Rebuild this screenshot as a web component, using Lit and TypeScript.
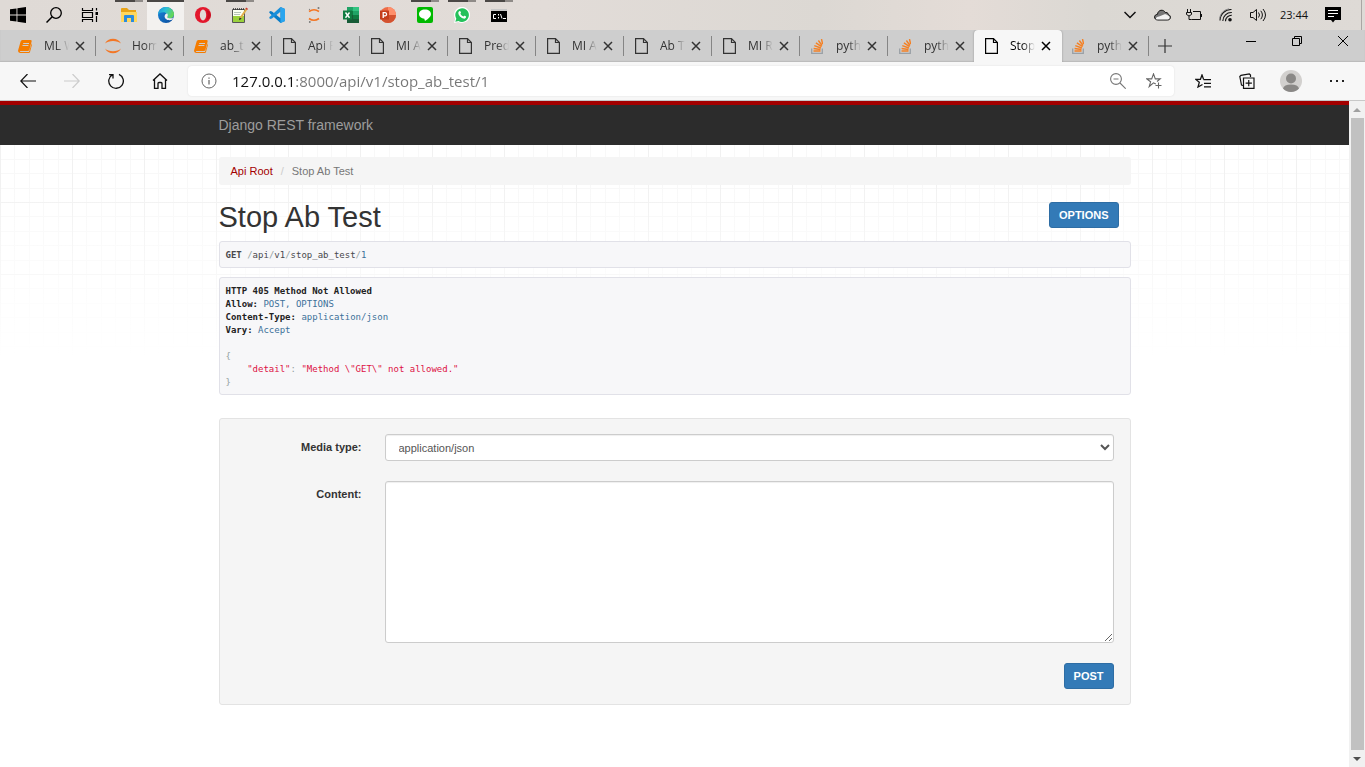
import { LitElement, html, css, svg, TemplateResult } from "lit";
import { customElement, property } from "lit/decorators.js";
import { classMap } from "lit/directives/class-map.js";

const icon = (w: number, h: number, body: unknown) => html`<svg
  width=${w}
  height=${h}
  viewBox="0 0 ${w} ${h}"
  fill="none"
  aria-hidden="true"
>${body}</svg>`;

const icons: Record<string, TemplateResult> = {
  windows: icon(16, 16, svg`<path fill="#000" d="M0 2.3 6.5 1.4V7.6H0zM7.4 1.3 16 0V7.6H7.4zM0 8.4H6.5V14.6L0 13.7zM7.4 8.4H16V16L7.4 14.7z"/>`),
  search: icon(16, 16, svg`<circle cx="10" cy="6" r="5.3" stroke="#000" stroke-width="1.3"/><path d="M6.2 9.8 .5 15.5" stroke="#000" stroke-width="1.5"/>`),
  taskview: icon(18, 16, svg`<path stroke="#000" stroke-width="1.2" d="M1.5 1V3.5H11.5V1M1.5 15V12.5H11.5V15M1.5 5.5H11.5V10.5H1.5zM15.5 1V3.500M15.5 9V15"/><path fill="#000" d="M14.500 5H17V8H14.500z"/>`),
  folder: icon(16, 14, svg`<path fill="#e8a317" d="M0 1Q0 0 1 0H6L8 2H15V5H0z"/><path fill="#ffd75e" d="M0 4H16V14H0z"/><path fill="#2b8be0" d="M3 8Q3 7 4 7H12Q13 7 13 8V14H10V10H6V14H3z"/>`),
  edge: icon(16, 16, svg`<defs><linearGradient id="ea" x1="0" y1="0" x2="1" y2=".4"><stop offset="0" stop-color="#1b8fd8"/><stop offset=".5" stop-color="#2cc0d6"/><stop offset="1" stop-color="#63d65a"/></linearGradient><linearGradient id="eb" x1="0" y1="0" x2="1" y2="1"><stop offset="0" stop-color="#1889dc"/><stop offset="1" stop-color="#0c4a9a"/></linearGradient></defs><circle cx="8" cy="8" r="8" fill="url(#eb)"/><path fill="url(#ea)" d="M0 8C0 3 4 0 8 0C13 0 16 4 16 7C16 10 14 11.3 11.8 11.3C10 11.3 9 10.8 9.3 9.8C9.8 8 8.5 5.2 5.5 5.2C2.5 5.2 .4 6.5 0 8z"/><path fill="#f3f1ef" d="M9.3 6.5C10 8 10 9 9.2 10.2C10 11.6 13 11.8 15.3 10.4L14 12.8C10 14 6.5 12 6.6 9.2C6.7 7.5 8 6.3 9.3 6.5z"/>`),
  opera: icon(16, 16, svg`<ellipse cx="8" cy="8" rx="8" ry="8" fill="#e3182d"/><ellipse cx="8" cy="8" rx="3.2" ry="5.4" fill="#e1dcd8"/><path fill="#a70014" d="M11 3C13 5 13 11 11 13C15 12 16 10 16 8S14 3.5 11 3z" opacity=".45"/>`),
  notepad: icon(17, 16, svg`<path fill="#fafff2" stroke="#555" d="M1.5 2.5H13.5V15.5H1.5z"/><path fill="#9bd13c" d="M2 9H13V15H2z"/><path stroke="#333" stroke-width="1.5" stroke-dasharray="1 1" d="M2 2H13"/><path stroke="#b5c4b5" d="M3 5.5H10M3 7.5H9"/><path stroke="#e0b04a" stroke-width="2" d="M15.5 2 9.5 11"/><path stroke="#c33" stroke-width="2.200" d="M16 1.2 15.3 2.3"/><path fill="#222" d="M8 13.2 8.6 10.6 10.6 11.8z"/>`),
  vscode: icon(16, 16, svg`<path fill="#0a7dc8" d="M11.5 0 16 2V14L11.5 16 1 6.5 0 5 1.5 4 3 4.4 11.5 11.2z"/><path fill="#2aa5ee" d="M11.5 0 16 2V14L11.5 16z"/><path fill="#1a8fda" d="M11.5 0V4.8L3 11.6 1.5 12 0 11 1 9.5z"/>`),
  jupyterSmall: icon(12, 16, svg`<path stroke="#f37726" stroke-width="1.6" d="M1 4.5Q6 1 11 4.5M1 11.5Q6 15 11 11.5"/><circle cx="10.5" cy="1" r="1" fill="#777"/><circle cx="1.5" cy="2.3" r=".6" fill="#777"/><circle cx="1.8" cy="15" r=".9" fill="#777"/>`),
  excel: icon(16, 16, svg`<path fill="#21a366" d="M4 0H16V16H4z"/><path fill="#33c481" d="M10 0H16V4H10z"/><path fill="#107c41" d="M4 4H10V8H4zM10 8H16V12H10z"/><path fill="#185c37" d="M4 8H10V16H4zM4 12H16V16H4z"/><path fill="#107c41" d="M0 3.5H9V12.5H0z"/><path stroke="#fff" stroke-width="1.4" d="M2.5 5.5 6.5 10.7M6.5 5.5 2.5 10.7"/>`),
  powerpoint: icon(16, 16, svg`<circle cx="8" cy="8" r="8" fill="#ed6c47"/><path fill="#ff8f6b" d="M8 0A8 8 0 0 1 16 8H8z"/><path fill="#d35230" d="M0 8H16A8 8 0 0 1 0 8z"/><path fill="#c43e1c" d="M0 3.5H9V12.5H0z"/><path stroke="#fff" stroke-width="1.3" d="M3.2 11V5.6H5.2Q6.6 5.8 6.6 7.2T5.2 8.8H3.2"/>`),
  line: icon(16, 16, svg`<rect width="16" height="16" rx="2" fill="#00b900"/><path fill="#fff" d="M8 2.6C11.6 2.6 14 4.7 14 7.2C14 9.6 11.5 11.5 8.3 13.8C7.6 14.2 7.7 12.8 7.4 11.8C4.3 11.4 2 9.7 2 7.2C2 4.7 4.4 2.6 8 2.6z"/>`),
  whatsapp: icon(16, 16, svg`<path fill="#fff" d="M0 16 1.2 12A8 8 0 1 1 4.2 14.9z"/><path fill="#25c15b" d="M1.3 14.7 2.3 11.7A6.8 6.8 0 1 1 4.5 13.9z"/><path fill="#fff" d="M5.3 4.2C6.2 3.7 6.4 4 7 5.6C7 6.2 6.3 6.5 6.4 6.8C7.2 8.3 8 9 9.4 9.5C9.8 9.3 10.1 8.5 10.6 8.7L12.1 9.5C12.3 10.8 11 11.9 9.6 11.6C6.8 11 4.4 8.4 4.3 6.1C4.3 5.2 4.8 4.6 5.3 4.2z"/>`),
  cmd: icon(16, 13, svg`<path fill="#000" d="M0 0H16V13H0z"/><path fill="#c8c8c8" d="M0 0H16V2H0z"/><path stroke="#fff" d="M5 5.5H2.5V9.5H5M7.5 5V6.5M7.5 8V9.5M9.5 5 11 9.5M12 9.5H15"/>`),
  chevron: icon(12, 8, svg`<path stroke="#111" stroke-width="1.5" d="M.5 1 6 6.5 11.5 1"/>`),
  cloud: icon(17, 12, svg`<path fill="#777" stroke="#111" d="M4 11C-.5 11-.5 5.5 3.5 5.3C4 .5 9.500 0 11.300 3.500C14 3 14.500 5.500 14.500 5.800C17.500 6.500 17 11 13.500 11z"/><path fill="#f2f2f2" d="M3 10.500C1 10.500 2 7.500 5 7.500L10 5.500C12 5 13 6 14 6.500C16.500 7.500 16 10.500 13.500 10.500z"/>`),
  battery: icon(16, 12, svg`<path stroke="#111" d="M7 2.500H14.500V10.500H5.500M15.500 5V8M1.500 0V3M4.500 0V3M.500 3.500H5.500V5.500L3 7 .500 5.500zM3 7V10.500H5.500"/>`),
  wifi: icon(14, 14, svg`<path stroke="#111" stroke-width="1.100" d="M1 12.500A11 11 0 0 1 12.500 1.500M3.800 13A8.500 8.500 0 0 1 12.800 4.500M6.500 13.300A6 6 0 0 1 12.800 7.300"/><path stroke="#888" d="M.5 10.500A12 12 0 0 1 10 .8"/><circle cx="11" cy="11.800" r="1.800" fill="#111"/>`),
  volume: icon(17, 14, svg`<path stroke="#111" d="M.5 4.500H3L6.500 1.500V12.500L3 9.500H.5zM8.500 4.500Q10.500 7 8.500 9.500M10.800 2.800Q14 7 10.800 11.200M13 1Q18 7 13 13"/>`),
  notice: icon(16, 16, svg`<path fill="#000" d="M0 0H16V13H10L8 15.500 6 13H0z"/><path stroke="#fff" d="M3 3.500H13M3 6.500H13M3 9.500H9"/>`),
  book: icon(14, 13, svg`<path fill="#f57c00" d="M4.300 0H12.500Q14 0 13.600 1.500L11.500 9.500Q11 11 9.500 11H2.300Q1.300 11.800 2.500 12H11L13.800 3L13.900 5 12 12Q11.800 13 10.600 13H2Q-.5 12.500 .2 10L2.600 1.600Q3 0 4.300 0z"/><path stroke="#cecece" d="M5.200 3.500H11M4.500 5.500H10.400"/>`),
  jupyter: icon(16, 16, svg`<path fill="#f37726" d="M0 5.500C2.500-.8 13.500-.8 16 5.500C12.500 2 3.500 2 0 5.500zM0 10.500C2.500 16.800 13.500 16.800 16 10.500C12.500 14 3.500 14 0 10.500z"/>`),
  page: icon(13, 16, svg`<path stroke="currentColor" stroke-width="1.200" d="M.6 .6H8.500L12.400 4.500V15.400H.6zM8.500 .6V4.500H12.400"/>`),
  stack: icon(12, 15, svg`<path stroke="#9aa0a6" stroke-width="1.300" d="M.7 9.500V14.300H11.300V9.500"/><path stroke="#f48024" stroke-width="1.400" d="M2.500 12H9.500M2.600 9.500 9.500 10.500M3.300 6.700 9.900 9M4.900 3.900 10.600 7.600M7.400 1.500 11 6.500M10.500 0 11.600 5"/>`),
  close: icon(10, 10, svg`<path stroke="currentColor" stroke-width="1.500" d="M1 1 9 9M9 1 1 9"/>`),
  plus: icon(14, 14, svg`<path stroke="#333" stroke-width="1.200" d="M7 0V14M0 7H14"/>`),
  minimize: icon(10, 10, svg`<path stroke="#000" d="M0 5.500H10"/>`),
  restore: icon(10, 10, svg`<path stroke="#000" d="M.5 2.500H7.500V9.500H.5zM2.500 2.500V.5H9.500V7.500H7.500"/>`),
  winClose: icon(10, 10, svg`<path stroke="#000" d="M0 0 10 10M10 0 0 10"/>`),
  back: icon(16, 14, svg`<path stroke="#111" stroke-width="1.200" d="M7.500 0 .8 7 7.500 14M1 7H16"/>`),
  forward: icon(16, 14, svg`<path stroke="#ccc" stroke-width="1.200" d="M8.500 0 15.200 7 8.500 14M15 7H0"/>`),
  refresh: icon(16, 16, svg`<path stroke="#111" stroke-width="1.300" d="M11 1.300A7.300 7.300 0 1 1 4.500 1.600M4.500 1.600H1M5 1V5.500"/>`),
  home: icon(16, 16, svg`<path stroke="#111" stroke-width="1.300" d="M1 7.500 8 1 15 7.500M2.500 6.500V15.300H6V10.500Q6 9.500 7 9.500H9Q10 9.500 10 10.500V15.300H13.500V6.500"/>`),
  info: icon(16, 16, svg`<circle cx="8" cy="8" r="7" stroke="#666"/><path stroke="#555" stroke-width="1.100" d="M8 7V11.500M8 4.500V5.700"/>`),
  zoomOut: icon(16, 16, svg`<circle cx="6" cy="6" r="5.400" stroke="#777" stroke-width="1.100"/><path stroke="#777" stroke-width="1.100" d="M3.500 6H8.500M10 10 15.700 15.700"/>`),
  starAdd: icon(16, 16, svg`<path stroke="#666" stroke-width="1.100" d="M9.800 11 7.500 9.800 3.200 13.500 4.600 8.800 .8 5.900H5.700L7.500 .9 9.300 5.900H14.200L11 8.500M12.500 9.500V15.500M9.500 12.500H15.500"/>`),
  favorites: icon(16, 14, svg`<path stroke="#111" stroke-width="1.300" d="M7.500 10.500 3 13 4.300 8.300 .8 5.400H5.400L7 1 8.600 5.400M8.500 5.700H16M9 9.300H16M9 12.800H16"/>`),
  collections: icon(16, 16, svg`<path stroke="#111" stroke-width="1.200" d="M4.500 5H15V15.300H4.500zM9.750 7V13.300M6.600 10.150H12.900M4 12.500 2.500 12 .8 3.500 2 2.300 10.300 1 11.500 2V4"/>`),
  avatar: icon(22, 22, svg`<circle cx="11" cy="11" r="11" fill="#d2d0ce"/><circle cx="11" cy="8.500" r="5" fill="#8a8886"/><path fill="#8a8886" d="M3 18.600Q4 14.500 11 14.500T19 18.600Q16 22 11 22T3 18.600z"/>`),
  more: icon(14, 4, svg`<path fill="#222" d="M0 1H2V3H0zM6 1H8V3H6zM12 1H14V3H12z"/>`),
  arrowUp: icon(8, 4, svg`<path fill="#a0a0a0" d="M4 0 8 4H0z"/>`),
  arrowDown: icon(8, 4, svg`<path fill="#505050" d="M0 0H8L4 4z"/>`),
};

const buttonReset = css`
  * { box-sizing: border-box; }
  svg { display: block; flex: none; }
  button {
    display: flex;
    align-items: center;
    justify-content: center;
    flex: none;
    margin: 0;
    padding: 0;
    border: 0;
    background: none;
    color: inherit;
    font: inherit;
  }
`;

@customElement("task-bar")
export class TaskBar extends LitElement {
  static styles = [buttonReset, css`
    :host {
      display: flex;
      height: 30px;
      flex: none;
      justify-content: space-between;
      background: linear-gradient(90deg, #dfdad6, #e2dcd8 40%, #dcd8d3 60%, #e4dcd7 71%, #dbd8d3 80%, #dedad6);
      font: 12px/30px "Open Sans", "Noto Sans", sans-serif;
      color: #111;
    }
    .group { display: flex; }
    .group button { height: 30px; }
    .system button { width: 36px; }
    .apps { margin-left: 2px; }
    .apps button { width: 37px; }
    .apps .running { background: linear-gradient(90deg, transparent 5px, #4b4846 5px 25px, #8f8b88 25px 33px, transparent 33px) 0 0 / 100% 2px no-repeat; }
    .apps .active { background: linear-gradient(#4b4846 2px, #f3f1ef 2px); }
    .tray button { width: 32px; }
    .tray .clock { width: 40px; font-size: 11px; }
    .tray .notice { width: 38px; }
    .desktop { width: 4px; margin-left: 9px; border-left: 1px solid #aaa6a3; }
  `];

  private apps: [string, string, string][] = [
    ["folder", "File Explorer", "running"],
    ["edge", "Edge", "active"],
    ["opera", "Opera", ""],
    ["notepad", "Notepad++", "running"],
    ["vscode", "Visual Studio Code", ""],
    ["jupyterSmall", "Jupyter", ""],
    ["excel", "Excel", ""],
    ["powerpoint", "PowerPoint", ""],
    ["line", "LINE", "running"],
    ["whatsapp", "WhatsApp", "running"],
    ["cmd", "Command Prompt", "running"],
  ];

  render() {
    return html`
      <div class="group">
        <div class="group system">
          <button aria-label="Start">${icons.windows}</button>
          <button aria-label="Search">${icons.search}</button>
          <button aria-label="Task View">${icons.taskview}</button>
        </div>
        <div class="group apps">
          ${this.apps.map(([key, label, state]) => html`<button class=${state} aria-label=${label}>${icons[key]}</button>`)}
        </div>
      </div>
      <div class="group tray">
        <button aria-label="Hidden icons">${icons.chevron}</button>
        <button aria-label="OneDrive">${icons.cloud}</button>
        <button aria-label="Battery">${icons.battery}</button>
        <button aria-label="Network">${icons.wifi}</button>
        <button aria-label="Volume">${icons.volume}</button>
        <button class="clock">23:44</button>
        <button class="notice" aria-label="Notifications">${icons.notice}</button>
        <div class="desktop"></div>
      </div>
    `;
  }
}

@customElement("browser-tab")
export class BrowserTab extends LitElement {
  @property() icon = "page";
  @property() label = "";
  @property({ type: Boolean, reflect: true }) active = false;
  @property({ type: Boolean }) plain = false;

  static styles = [buttonReset, css`
    :host {
      display: flex;
      align-items: center;
      width: 88px;
      height: 32px;
      flex: none;
      color: #333;
      font: 12px/20px "Open Sans", "Noto Sans", sans-serif;
    }
    :host([active]) {
      margin: 0 -1px 0 -2px;
      border-radius: 4px 4px 0 0;
      background: #f7f7f7;
      box-shadow: 0 0 2px #888;
      clip-path: inset(0 -3px 0 -3px);
      color: #000;
    }
    .tab {
      display: flex;
      align-items: center;
      flex: 1;
      height: 20px;
      padding-left: 7px;
      border-right: 1px solid #858585;
    }
    .plain { border-right-color: transparent; }
    .icon { display: flex; justify-content: center; width: 20px; }
    .label {
      width: 25px;
      margin: 0 6px 0 9px;
      white-space: nowrap;
      -webkit-mask-image: linear-gradient(90deg, #000 50%, transparent);
      mask-image: linear-gradient(90deg, #000 50%, transparent);
    }
  `];

  render() {
    return html`
      <div class=${classMap({ tab: true, plain: this.plain || this.active })}>
        <span class="icon">${icons[this.icon]}</span>
        <span class="label">${this.label}</span>
        <button aria-label="Close tab">${icons.close}</button>
      </div>
    `;
  }
}

@customElement("browser-chrome")
export class BrowserChrome extends LitElement {
  static styles = [buttonReset, css`
    :host { display: block; flex: none; font-family: "Open Sans", "Noto Sans", sans-serif; }
    .strip { display: flex; height: 32px; padding-left: 8px; background: #cecece; box-shadow: inset 0 -1px 1px #bbb; }
    .new-tab { width: 32px; height: 32px; }
    .window { display: flex; margin-left: auto; margin-right: -1px; }
    .window button { width: 46px; height: 22px; }
    .toolbar {
      display: flex;
      align-items: center;
      height: 39px;
      padding: 0 4px 0 6px;
      border-bottom: 1px solid #c8c8c8;
      background: #f7f7f7;
    }
    .toolbar > button { width: 44px; height: 36px; }
    .address {
      display: flex;
      align-items: center;
      flex: 1;
      height: 30px;
      margin: 0 7px 0 6px;
      padding: 0 12px 0 13px;
      border-radius: 4px;
      background: #fff;
      box-shadow: 0 0 2px #ddd;
    }
    .address input {
      flex: 1;
      min-width: 0;
      height: 28px;
      margin: 0 15px;
      padding: 0;
      border: 0;
      outline: 0;
      background: linear-gradient(90deg, #111 62px, #767676 62px);
      -webkit-background-clip: text;
      background-clip: text;
      color: #767676;
      -webkit-text-fill-color: transparent;
      font: 15px/28px "Open Sans", "Noto Sans", sans-serif;
    }
    .address .star { margin-left: 20px; }
    .toolbar > .more { width: 48px; }
  `];

  private tabs: [string, string][] = [
    ["book", "ML W"],
    ["jupyter", "Hom"],
    ["book", "ab_t"],
    ["page", "Api R"],
    ["page", "MI A"],
    ["page", "Pred"],
    ["page", "MI A"],
    ["page", "Ab T"],
    ["page", "MI R"],
    ["stack", "pyth"],
    ["stack", "pyth"],
    ["page", "Stop"],
    ["stack", "pyth"],
  ];
  private current = 11;

  render() {
    return html`
      <div class="strip">
        ${this.tabs.map(([key, label], i) => html`<browser-tab
          .icon=${key}
          .label=${label}
          ?active=${i === this.current}
          .plain=${i === this.current - 1}
        ></browser-tab>`)}
        <button class="new-tab" aria-label="New tab">${icons.plus}</button>
        <div class="window">
          <button aria-label="Minimize">${icons.minimize}</button>
          <button aria-label="Restore">${icons.restore}</button>
          <button aria-label="Close">${icons.winClose}</button>
        </div>
      </div>
      <div class="toolbar">
        <button aria-label="Back">${icons.back}</button>
        <button aria-label="Forward">${icons.forward}</button>
        <button aria-label="Refresh">${icons.refresh}</button>
        <button aria-label="Home">${icons.home}</button>
        <div class="address">
          <button aria-label="Site information">${icons.info}</button>
          <input type="text" aria-label="Address" spellcheck="false" .value=${"127.0.0.1:8000/api/v1/stop_ab_test/1"} />
          <button aria-label="Zoom">${icons.zoomOut}</button>
          <button class="star" aria-label="Add to favorites">${icons.starAdd}</button>
        </div>
        <button aria-label="Favorites">${icons.favorites}</button>
        <button aria-label="Collections">${icons.collections}</button>
        <button aria-label="Profile">${icons.avatar}</button>
        <button class="more" aria-label="Settings and more">${icons.more}</button>
      </div>
    `;
  }
}

@customElement("api-page")
export class ApiPage extends LitElement {
  static styles = css`
    * { box-sizing: border-box; }
    :host {
      display: block;
      flex: 1;
      min-width: 0;
      overflow: hidden;
      background:
        linear-gradient(#fff0 80px, #fff 255px),
        linear-gradient(90deg, #f1f1f1 1px, transparent 1px) 0 -43px / 72px 72px,
        linear-gradient(#f1f1f1 1px, transparent 1px) 0 -43px / 72px 72px,
        linear-gradient(90deg, transparent 14px, #f8f8f8 14px 15px, transparent 15px 29px, #f8f8f8 29px 30px, transparent 30px 43px, #f8f8f8 43px 44px, transparent 44px 58px, #f8f8f8 58px 59px, transparent 59px) 0 -43px / 72px 72px,
        linear-gradient(transparent 14px, #f8f8f8 14px 15px, transparent 15px 29px, #f8f8f8 29px 30px, transparent 30px 43px, #f8f8f8 43px 44px, transparent 44px 58px, #f8f8f8 58px 59px, transparent 59px) 0 -43px / 72px 72px,
        #fff;
      font: 11px/16px "Liberation Sans", Arial, sans-serif;
      color: #333;
    }
    .navbar { border-top: 4px solid #a30000; background: #2c2c2c; }
    .container { max-width: 912px; margin: 0 auto; }
    .brand { display: inline-block; font-size: 14px; line-height: 40px; color: #9d9d9d; text-decoration: none; }
    .breadcrumb {
      display: flex;
      margin: 12px 0 17px;
      padding: 6px 12px;
      border-radius: 3px;
      background: #f5f5f5;
      list-style: none;
      color: #777;
    }
    .breadcrumb a { color: #a30000; text-decoration: none; }
    .breadcrumb li + li::before { content: "/"; padding: 0 8px; color: #ccc; }
    .heading { display: flex; justify-content: space-between; align-items: flex-start; margin-bottom: 9px; padding-right: 12px; }
    h1 { margin: 0; font-size: 29px; line-height: 30px; font-weight: 400; }
    .primary {
      height: 26px;
      padding: 0 9px;
      border: 1px solid #2e6da4;
      border-radius: 3px;
      background: #337ab7;
      color: #fff;
      font: bold 11px/16px "Liberation Sans", Arial, sans-serif;
    }
    pre {
      margin: 0 0 9px;
      padding: 7px 6px 5px;
      border: 1px solid #e1e1e8;
      border-radius: 3px;
      background: #f7f7f9;
      font: 9px/13px "DejaVu Sans Mono", monospace;
      color: #48484c;
      overflow: hidden;
    }
    .strong { color: #222; }
    .pun { color: #93a1a1; }
    .lit { color: #3d7199; }
    .str { color: #dd1144; }
    form {
      display: grid;
      grid-template-columns: 126px minmax(0, 1fr);
      gap: 20px 23px;
      margin-top: 23px;
      padding: 15px 16px;
      border: 1px solid #e3e3e3;
      border-radius: 3px;
      background: #f5f5f5;
    }
    label { padding-top: 5px; font-weight: 700; text-align: right; }
    select, textarea {
      display: block;
      width: 100%;
      border: 1px solid #ccc;
      border-radius: 3px;
      background: #fff;
      color: #555;
      font: 11px/16px "Liberation Sans", Arial, sans-serif;
      box-shadow: inset 0 1px 1px #0001;
    }
    select { height: 27px; padding: 0 9px; }
    textarea { height: 162px; padding: 5px 9px; resize: vertical; }
    .actions { grid-column: 1 / -1; display: flex; justify-content: flex-end; }
  `;

  render() {
    return html`
      <nav class="navbar"><div class="container"><a class="brand" href="#">Django REST framework</a></div></nav>
      <main class="container">
        <ul class="breadcrumb"><li><a href="#">Api Root</a></li><li>Stop Ab Test</li></ul>
        <div class="heading"><h1>Stop Ab Test</h1><button class="primary">OPTIONS</button></div>
        <pre><b>GET</b> <span class="pun">/</span>api<span class="pun">/</span>v1<span class="pun">/</span>stop_ab_test<span class="pun">/</span><span class="lit">1</span></pre>
        <pre><b class="strong">HTTP 405 Method Not Allowed</b>
<b class="strong">Allow:</b> <span class="lit">POST, OPTIONS</span>
<b class="strong">Content-Type:</b> <span class="lit">application/json</span>
<b class="strong">Vary:</b> <span class="lit">Accept</span>

<span class="pun">{</span>
    <span class="str">"detail"</span><span class="pun">:</span> <span class="str">"Method \\"GET\\" not allowed."</span>
<span class="pun">}</span></pre>
        <form @submit=${(e: Event) => e.preventDefault()}>
          <label for="media">Media type:</label>
          <select id="media"><option>application/json</option></select>
          <label for="content">Content:</label>
          <textarea id="content"></textarea>
          <div class="actions"><button class="primary">POST</button></div>
        </form>
      </main>
    `;
  }
}

@customElement("app-root")
export class AppRoot extends LitElement {
  static styles = css`
    * { box-sizing: border-box; }
    :host { display: flex; flex-direction: column; height: 100vh; overflow: hidden; background: #fff; }
    .view { display: flex; flex: 1; min-height: 0; }
    .scrollbar { display: flex; flex-direction: column; width: 16px; background: #f1f1f1; }
    .arrow { display: flex; align-items: center; justify-content: center; height: 17px; }
    .thumb { flex: 1; margin: 0 1px 0 2px; background: #c1c1c1; }
  `;

  render() {
    return html`
      <task-bar></task-bar>
      <browser-chrome></browser-chrome>
      <div class="view">
        <api-page></api-page>
        <div class="scrollbar">
          <span class="arrow">${icons.arrowUp}</span>
          <span class="thumb"></span>
          <span class="arrow">${icons.arrowDown}</span>
        </div>
      </div>
    `;
  }
}
